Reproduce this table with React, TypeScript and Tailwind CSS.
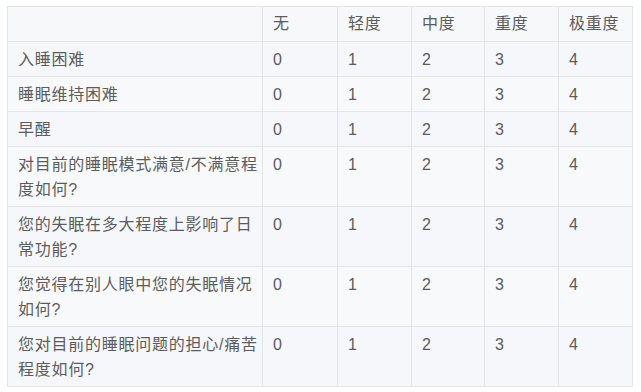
import React from "react";

const headers = ["无", "轻度", "中度", "重度", "极重度"];
const rows: React.ReactNode[] = [
  "入睡困难",
  "睡眠维持困难",
  "早醒",
  <>对目前的睡眠模式满意/不满意程<br />度如何?</>,
  <>您的失眠在多大程度上影响了日<br />常功能?</>,
  <>您觉得在别人眼中您的失眠情况<br />如何?</>,
  <>您对目前的睡眠问题的担心/痛苦<br />程度如何?</>,
];

const widths = ["w-[255px]", "w-[75px]", "w-[74px]", "w-[73px]", "w-[74px]", "w-[74px]"];

export default function App() {
  return (
    <div
      className="w-[641px] h-[392px] bg-white pl-[7px] pt-[6px] text-[#5c5c5c] text-[16px] leading-[25px] tracking-[0.75px]"
      style={{ fontFamily: '"Liberation Sans", "Noto Sans CJK SC", sans-serif' }}
    >
      <table className="border-collapse table-fixed w-[625px]">
        <colgroup>
          {widths.map((w, i) => (
            <col key={i} className={w} />
          ))}
        </colgroup>
        <thead>
          <tr className="bg-[#f7f8fa] h-[35px]">
            <th className="border border-[#e3e5e9]"></th>
            {headers.map((h) => (
              <th key={h} className="border border-[#e3e5e9] font-normal text-left pl-[10px] align-top pt-[4px]">
                {h}
              </th>
            ))}
          </tr>
        </thead>
        <tbody>
          {rows.map((r, i) => (
            <tr key={i} className={`${i % 2 === 0 ? "bg-[#f5f7fa]" : "bg-[#f8f9fb]"} ${i < 3 ? "h-[35px]" : "h-[60px]"}`}>
              <td className="border border-[#e3e5e9] pl-[10px] align-top pt-[5px]">{r}</td>
              {[0, 1, 2, 3, 4].map((n) => (
                <td key={n} className="border border-[#e3e5e9] pl-[10px] align-top pt-[5px]">
                  {n}
                </td>
              ))}
            </tr>
          ))}
        </tbody>
      </table>
    </div>
  );
}
